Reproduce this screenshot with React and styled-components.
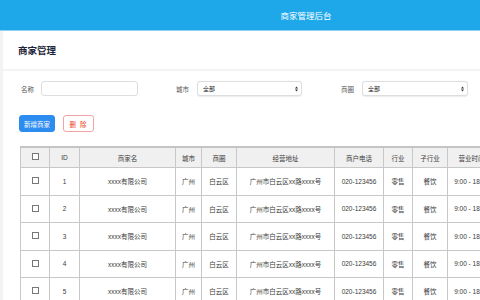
import styled, { createGlobalStyle } from "styled-components";

const GlobalStyle = createGlobalStyle`
    html, body {
        margin: 0;
        padding: 0;
        overflow: hidden;
        background: #f3f3f3;
    }
    body {
        font-family: "Liberation Sans", "Noto Sans CJK SC", sans-serif;
        color: #333;
    }
`;

const Page = styled.div`
    width: 612px;
    min-height: 300px;
    background: #f3f3f3;
`;

const TopBar = styled.header`
    height: 30px;
    background: #1ea8ea;
    border-bottom: 1px solid #8fd0f2;
    display: flex;
    align-items: center;
    justify-content: center;
    color: #fff;
    font-size: 8.5px;
`;

const Main = styled.main`
    padding-left: 3px;
    display: flex;
    flex-direction: column;
    gap: 2px;
`;

const TitleCard = styled.div`
    background: #fff;
    height: 38px;
    padding-left: 15px;
    display: flex;
    align-items: center;
    font-size: 9.5px;
    font-weight: bold;
    color: #1c2438;
`;

const Card = styled.div`
    background: #fff;
    padding: 10px 0 0 17px;
`;

const FilterRow = styled.div`
    display: flex;
    align-items: center;
    height: 15px;
`;

const Field = styled.div`
    display: flex;
    align-items: center;
    margin-left: ${p => p.$offset || 0}px;
`;

const Label = styled.span`
    font-size: 6.5px;
    color: #555;
    width: 12px;
    margin: 0 ${p => p.$gap || 8}px 0 1px;
    white-space: nowrap;
`;

const TextBox = styled.div`
    width: ${p => p.$w}px;
    height: 15px;
    box-sizing: border-box;
    border: 1px solid #dcdee2;
    border-radius: 3px;
    background: #fff;
`;

const SelectBox = styled(TextBox)`
    display: flex;
    align-items: center;
    justify-content: space-between;
    padding: 0 3px 0 5px;
    font-size: 6px;
    color: #222;
    box-shadow: 0 0.5px 1px rgba(0, 0, 0, 0.08);
`;

const Arrows = () => (
    <svg width="3" height="6" viewBox="0 0 3 6">
        <path d="M0 2.5 L1.5 0.5 L3 2.5 Z" fill="#333" />
        <path d="M0 3.5 L1.5 5.5 L3 3.5 Z" fill="#333" />
    </svg>
);

const ButtonRow = styled.div`
    display: flex;
    gap: 8px;
    margin-top: 19px;
    margin-left: -1px;
`;

const Button = styled.button`
    height: 17px;
    padding: 0;
    width: ${p => p.$w}px;
    border-radius: 3px;
    font-family: inherit;
    font-size: 6.5px;
    cursor: pointer;
    background: ${p => (p.$danger ? "#fff" : "#2d8cf0")};
    color: ${p => (p.$danger ? "#ed4014" : "#fff")};
    border: 1px solid ${p => (p.$danger ? "#f3a3a3" : "#2d8cf0")};
    letter-spacing: ${p => (p.$danger ? "1px" : "0")};
`;

const Table = styled.table`
    margin-top: 14px;
    border-collapse: collapse;
    table-layout: fixed;
    width: 556px;
    font-size: 6.5px;
    border-top: 2px solid #c4c4c4;
`;

const Th = styled.th`
    height: 19px;
    width: ${p => p.$w}px;
    background: #f0f0f0;
    border: 1px solid #c8c8c8;
    font-weight: normal;
    color: #3a3a3a;
    text-align: center;
    padding: 0;
    white-space: nowrap;
    overflow: hidden;
`;

const Td = styled.td`
    height: 26.5px;
    border: 1px solid #c8c8c8;
    text-align: center;
    padding: 0;
    color: #3a3a3a;
    white-space: nowrap;
    overflow: hidden;
`;

const Check = styled.span`
    display: inline-block;
    width: 5px;
    height: 5px;
    border: 0.8px solid #777;
    background: #fff;
    vertical-align: middle;
    position: relative;
    top: -1px;
`;

const Link = styled.span`
    color: #2d8cf0;
    margin: 0 2px;
`;

const columns = [
    { key: "check", w: 28 },
    { key: "ID", w: 29 },
    { key: "商家名", w: 95 },
    { key: "城市", w: 25 },
    { key: "商圈", w: 34 },
    { key: "经营地址", w: 97 },
    { key: "商户电话", w: 48 },
    { key: "行业", w: 28 },
    { key: "子行业", w: 34 },
    { key: "营业时间", w: 47 },
    { key: "操作", w: 91 },
];

const rows = Array.from({ length: 8 }, (_, i) => ({
    id: i + 1,
    name: "xxxx有限公司",
    city: "广州",
    area: "白云区",
    address: "广州市白云区xx路xxxx号",
    phone: "020-123456",
    trade: "零售",
    sub: "餐饮",
    hours: "9:00 - 18:00",
}));

const App = () => {
    return (
        <Page>
            <GlobalStyle />
            <TopBar>商家管理后台</TopBar>
            <Main>
                <TitleCard>商家管理</TitleCard>
                <Card>
                    <FilterRow>
                        <Field>
                            <Label>名称</Label>
                            <TextBox $w={97} />
                        </Field>
                        <Field $offset={37}>
                            <Label $gap={9}>城市</Label>
                            <SelectBox $w={105}>全部<Arrows /></SelectBox>
                        </Field>
                        <Field $offset={38}>
                            <Label $gap={9}>商圈</Label>
                            <SelectBox $w={106}>全部<Arrows /></SelectBox>
                        </Field>
                    </FilterRow>
                    <ButtonRow>
                        <Button $w={36}>新增商家</Button>
                        <Button $w={31} $danger>删 除</Button>
                    </ButtonRow>
                    <Table>
                        <thead>
                            <tr>
                                {columns.map(c => (
                                    <Th key={c.key} $w={c.w}>
                                        {c.key === "check" ? <Check /> : c.key}
                                    </Th>
                                ))}
                            </tr>
                        </thead>
                        <tbody>
                            {rows.map(r => (
                                <tr key={r.id}>
                                    <Td><Check /></Td>
                                    <Td>{r.id}</Td>
                                    <Td>{r.name}</Td>
                                    <Td>{r.city}</Td>
                                    <Td>{r.area}</Td>
                                    <Td>{r.address}</Td>
                                    <Td>{r.phone}</Td>
                                    <Td>{r.trade}</Td>
                                    <Td>{r.sub}</Td>
                                    <Td>{r.hours}</Td>
                                    <Td><Link>编辑</Link><Link>删除</Link></Td>
                                </tr>
                            ))}
                        </tbody>
                    </Table>
                </Card>
            </Main>
        </Page>
    );
};

export default App;
